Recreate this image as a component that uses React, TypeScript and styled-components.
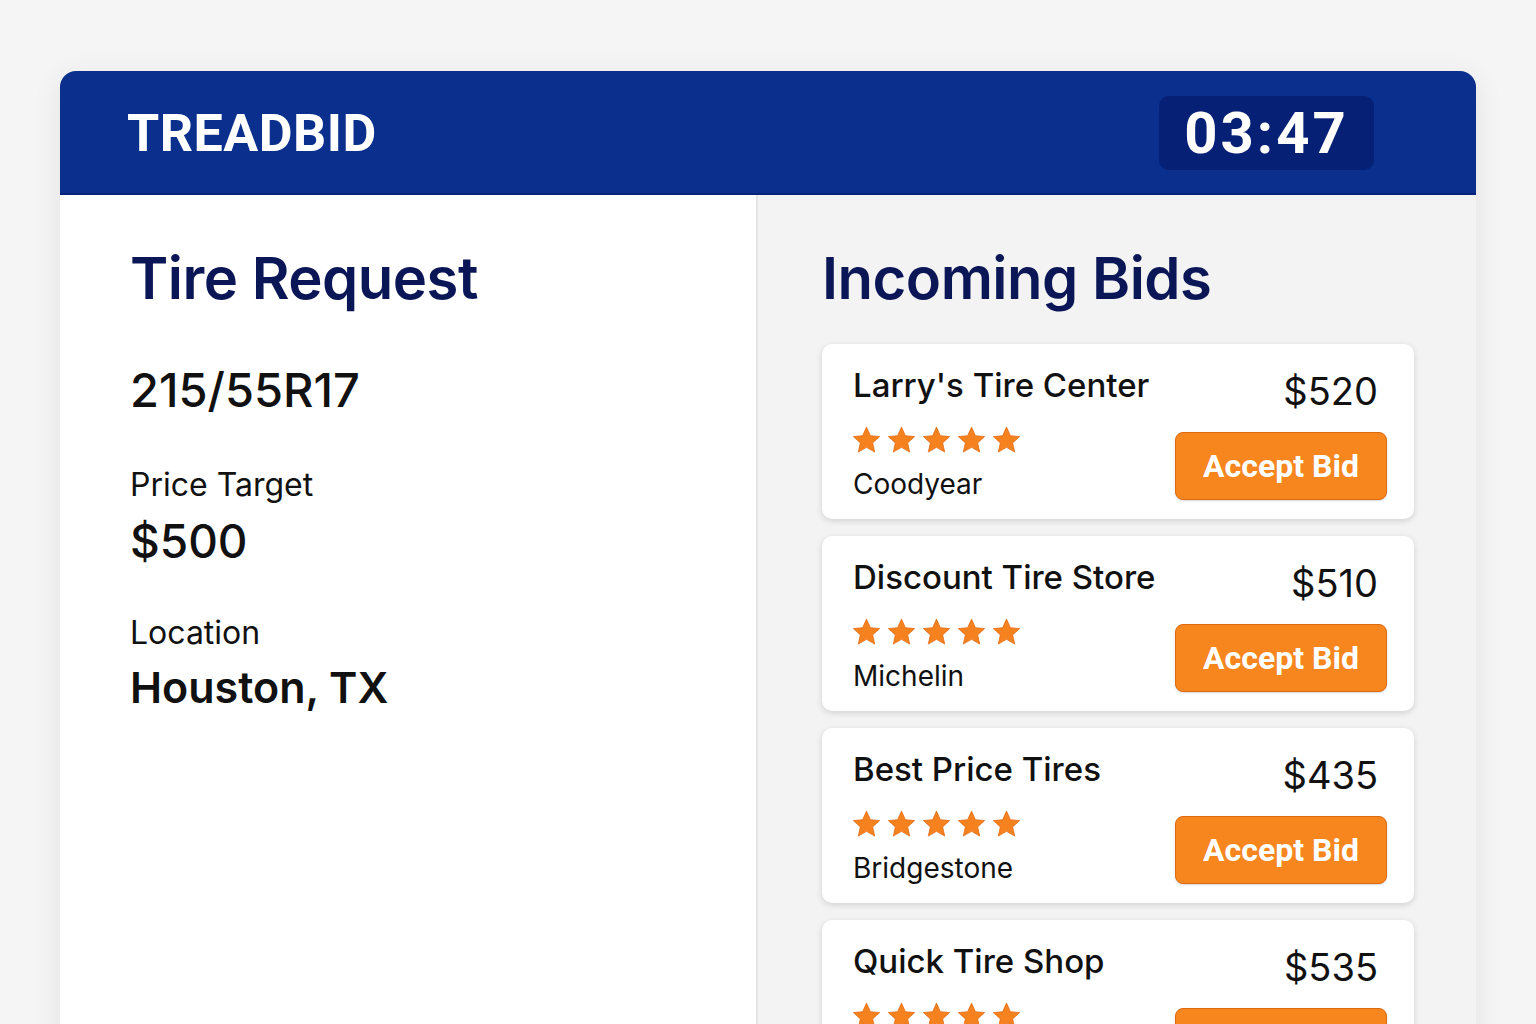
import { ReactElement } from "react";
import styled, { createGlobalStyle } from "styled-components";

interface Bid {
  id: number;
  shop: string;
  price: number;
  brand: string;
  rating: number;
}

const BIDS: Bid[] = [
  { id: 1, shop: "Larry's Tire Center", price: 520, brand: "Coodyear", rating: 5 },
  { id: 2, shop: "Discount Tire Store", price: 510, brand: "Michelin", rating: 5 },
  { id: 3, shop: "Best Price Tires", price: 435, brand: "Bridgestone", rating: 5 },
  { id: 4, shop: "Quick Tire Shop", price: 535, brand: "Goodyear", rating: 5 },
];

function Star(): ReactElement {
  return (
    <svg width="29" height="28" viewBox="0 0 24 23">
      <path
        d="M12 0.8l3.2 7.1 7.7 0.8-5.8 5.2 1.7 7.6L12 17.6l-6.8 3.9 1.7-7.6L1.1 8.7l7.7-0.8z"
        fill="#f5821f"
        stroke="#e4650c"
        strokeWidth="0.6"
        strokeLinejoin="round"
      />
    </svg>
  );
}

function BidCard({ bid }: { bid: Bid }): ReactElement {
  return (
    <CardBox>
      <ShopName>{bid.shop}</ShopName>
      <Price>${bid.price}</Price>
      <Details>
        <Stars>
          {Array.from({ length: bid.rating }).map((_, i) => (
            <Star key={`star_${bid.id}_${i}`} />
          ))}
        </Stars>
        <Brand>{bid.brand}</Brand>
      </Details>
      <AcceptButton>Accept Bid</AcceptButton>
    </CardBox>
  );
}

export default function App(): ReactElement {
  return (
    <>
      <GlobalStyle />
      <Page>
        <Frame>
          <Header>
            <Logo>TREADBID</Logo>
            <Timer>03:47</Timer>
          </Header>
          <Body>
            <RequestPanel>
              <PanelTitle>Tire Request</PanelTitle>
              <TireSize>215/55R17</TireSize>
              <Field>
                <FieldLabel>Price Target</FieldLabel>
                <FieldValue>$500</FieldValue>
              </Field>
              <Field>
                <FieldLabel>Location</FieldLabel>
                <FieldValue className="location">Houston, TX</FieldValue>
              </Field>
            </RequestPanel>
            <BidsPanel>
              <PanelTitle>Incoming Bids</PanelTitle>
              <BidList>
                {BIDS.map((bid) => (
                  <BidCard key={`bid_${bid.id}`} bid={bid} />
                ))}
              </BidList>
            </BidsPanel>
          </Body>
        </Frame>
      </Page>
    </>
  );
}

const GlobalStyle = createGlobalStyle`
  html, body {
    margin: 0;
    padding: 0;
    background: #f5f5f5;
    font-family: Inter, "Noto Sans", sans-serif;
    color: #111;
  }
  * {
    box-sizing: border-box;
  }
`;

const Page = styled.div`
  width: 1536px;
  height: 1024px;
  overflow: hidden;
  padding: 71px 60px 0 60px;
`;

const Frame = styled.div`
  height: 1100px;
  border-radius: 16px 16px 0 0;
  overflow: hidden;
  background: #fff;
  box-shadow: 0 6px 30px rgba(0, 0, 0, 0.08);
  display: flex;
  flex-direction: column;
`;

const Header = styled.header`
  height: 124px;
  flex-shrink: 0;
  background: #0a2f8c;
  border-bottom: 2px solid #06237a;
  display: flex;
  align-items: center;
  justify-content: space-between;
  padding: 0 102px 0 67px;
`;

const Logo = styled.div`
  color: #fff;
  font-family: Roboto, Inter, sans-serif;
  font-weight: 700;
  font-size: 52px;
  letter-spacing: 0.5px;
  margin-top: 2px;
`;

const Timer = styled.div`
  width: 215px;
  height: 74px;
  border-radius: 10px;
  background: #052074;
  color: #fff;
  font-family: Roboto, Inter, sans-serif;
  font-weight: 700;
  font-size: 58px;
  letter-spacing: 3px;
  display: flex;
  align-items: center;
  justify-content: center;
  margin-top: 2px;
`;

const Body = styled.div`
  flex: 1;
  display: grid;
  grid-template-columns: 698px 1fr;
`;

const RequestPanel = styled.section`
  background: #fff;
  border-right: 2px solid #e4e4e4;
  padding: 49px 40px 0 70px;
  display: flex;
  flex-direction: column;
`;

const BidsPanel = styled.section`
  background: #f3f3f3;
  padding: 49px 62px 0 64px;
  display: flex;
  flex-direction: column;
`;

const PanelTitle = styled.h1`
  margin: 0;
  font-size: 58px;
  font-weight: 600;
  line-height: 1.2;
  color: #0b1657;
  letter-spacing: -0.5px;
`;

const TireSize = styled.div`
  margin-top: 48px;
  font-size: 47px;
  font-weight: 500;
  line-height: 1.2;
  color: #111;
`;

const Field = styled.div`
  margin-top: 48px;
  display: flex;
  flex-direction: column;
  gap: 10px;

  & + & {
    margin-top: 44px;
  }
`;

const FieldLabel = styled.div`
  font-size: 32px;
  line-height: 1.2;
  color: #111;
`;

const FieldValue = styled.div`
  font-size: 46px;
  font-weight: 500;
  line-height: 1.2;
  color: #111;

  &.location {
    font-size: 43px;
    font-weight: 600;
  }
`;

const BidList = styled.div`
  margin-top: 30px;
  display: flex;
  flex-direction: column;
  gap: 17px;
`;

const CardBox = styled.div`
  background: #fff;
  border-radius: 10px;
  box-shadow: 0 2px 6px rgba(0, 0, 0, 0.14);
  height: 175px;
  padding: 20px 27px 0 31px;
  display: grid;
  grid-template-columns: 1fr auto;
  grid-template-rows: auto auto;
  align-items: start;
`;

const ShopName = styled.div`
  font-size: 33px;
  font-weight: 500;
  line-height: 1.3;
  color: #111;
`;

const Price = styled.div`
  font-size: 38px;
  font-weight: 400;
  line-height: 1.3;
  color: #111;
  text-align: right;
  padding-right: 9px;
  margin-top: 3px;
`;

const Details = styled.div`
  display: flex;
  flex-direction: column;
  gap: 12px;
  margin-top: -6px;
`;

const Stars = styled.div`
  display: flex;
  gap: 6px;
  margin-left: -1px;
`;

const Brand = styled.div`
  font-size: 28px;
  line-height: 1.3;
  color: #111;
`;

const AcceptButton = styled.button`
  margin-top: 0;
  width: 212px;
  height: 68px;
  border-radius: 8px;
  border: 1px solid #de6a0e;
  background: #f7861f;
  color: #fff;
  font-family: Roboto, Inter, sans-serif;
  font-size: 32px;
  font-weight: 700;
  box-shadow: 0 1px 2px rgba(0, 0, 0, 0.15);
  cursor: pointer;
`;
